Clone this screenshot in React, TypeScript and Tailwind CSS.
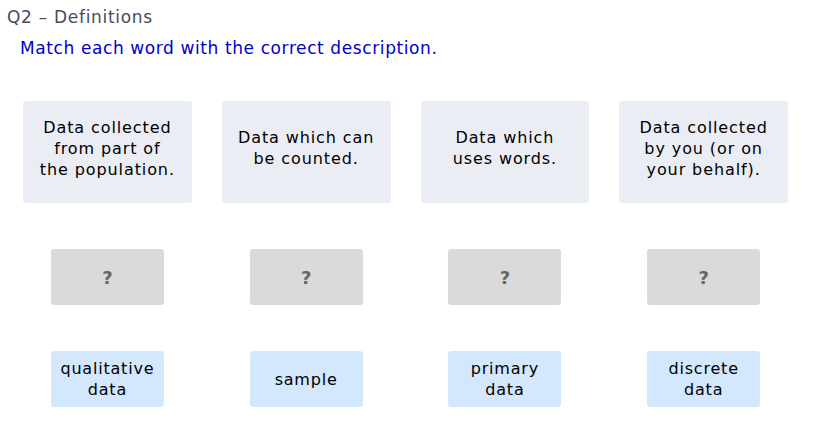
import React from "react";

const descriptions = [
  ["Data collected", "from part of", "the population."],
  ["Data which can", "be counted."],
  ["Data which", "uses words."],
  ["Data collected", "by you (or on", "your behalf)."],
];

const words = [
  ["qualitative", "data"],
  ["sample"],
  ["primary", "data"],
  ["discrete", "data"],
];

export default function App() {
  return (
    <div
      className="w-[816px] h-[438px] bg-white overflow-hidden"
      style={{ fontFamily: '"DejaVu Sans", Verdana, sans-serif' }}
    >
      <div className="pl-[7px] pt-[6px] text-[17px] leading-[22px] tracking-[0.7px] text-[#4a4a60]">
        Q2 – Definitions
      </div>
      <div className="pl-[20px] pt-[9px] text-[17px] leading-[22px] tracking-[0.6px] text-[#0000cc]">
        Match each word with the correct description.
      </div>
      <div className="mt-[42px] pl-[23px] w-[788px] grid grid-cols-4 gap-x-[30px]">
        {descriptions.map((lines, i) => (
          <div key={i} className="flex flex-col items-center">
            <div className="w-full h-[102px] rounded-[3px] bg-[#ebedf5] flex flex-col items-center justify-center pb-[8px] text-[16px] leading-[21px] tracking-[0.9px] text-black text-center">
              {lines.map((l, j) => (
                <div key={j}>{l}</div>
              ))}
            </div>
            <div className="mt-[46px] w-[113px] h-[56px] rounded-[3px] bg-[#dadada] flex items-center justify-center text-[18px] font-bold text-[#666]">
              ?
            </div>
            <div className="mt-[46px] w-[113px] h-[56px] rounded-[3px] bg-[#d3e7fd] flex flex-col items-center justify-center text-[16px] leading-[21px] tracking-[0.8px] text-black text-center">
              {words[i].map((l, j) => (
                <div key={j}>{l}</div>
              ))}
            </div>
          </div>
        ))}
      </div>
    </div>
  );
}
